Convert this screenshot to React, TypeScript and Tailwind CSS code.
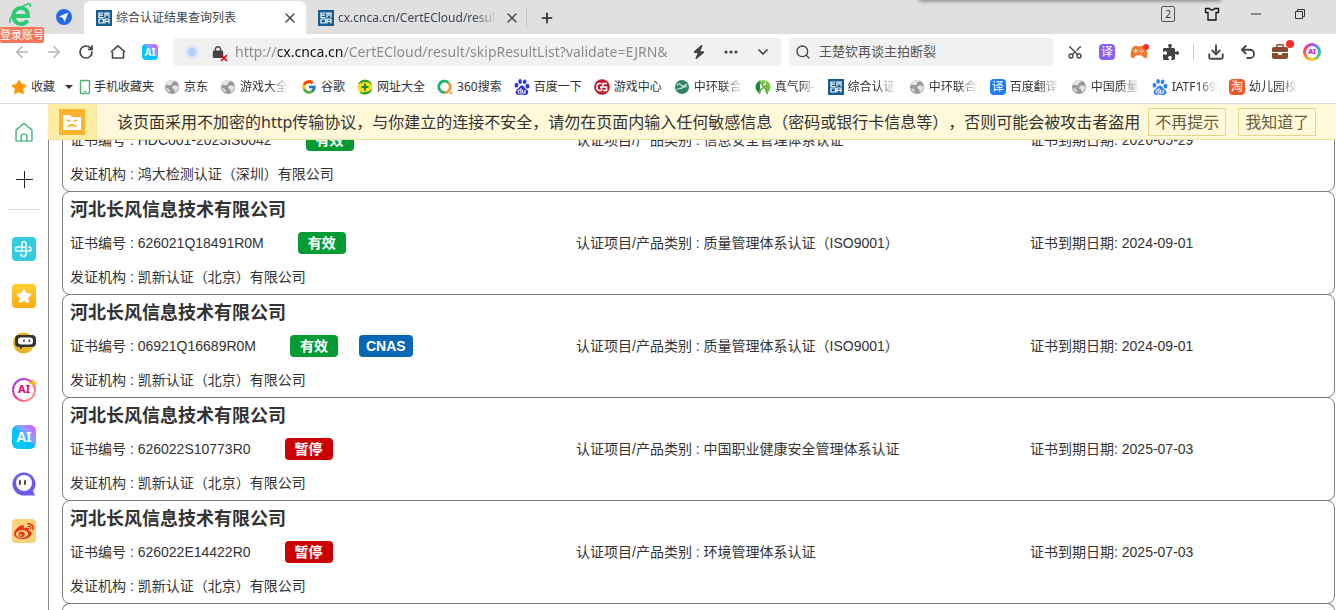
import type { ReactNode } from 'react';
import {
    ArrowLeft, ArrowRight, ChevronDown, Download, Minus, Plus, RotateCw, Scissors, Search, Undo2, X,
} from 'lucide-react';
import { FaBolt, FaBriefcase, FaLock, FaPuzzlePiece, FaStar } from 'react-icons/fa6';
import { FcGoogle } from 'react-icons/fc';
import { IoGameController } from 'react-icons/io5';
import { SiBaidu, SiSinaweibo } from 'react-icons/si';

type Status = 'valid' | 'suspended';

interface Certificate {
    company?: string;
    number: string;
    status: Status;
    cnas?: boolean;
    category: string;
    expires: string;
    issuer: string;
}

const COMPANY = '河北长风信息技术有限公司';
const ISSUER = '凯新认证（北京）有限公司';

const certificates: Certificate[] = [
    { number: 'HDC001-2023IS0042', status: 'valid', category: '信息安全管理体系认证', expires: '2026-05-29', issuer: '鸿大检测认证（深圳）有限公司' },
    { company: COMPANY, number: '626021Q18491R0M', status: 'valid', category: '质量管理体系认证（ISO9001）', expires: '2024-09-01', issuer: ISSUER },
    { company: COMPANY, number: '06921Q16689R0M', status: 'valid', cnas: true, category: '质量管理体系认证（ISO9001）', expires: '2024-09-01', issuer: ISSUER },
    { company: COMPANY, number: '626022S10773R0', status: 'suspended', category: '中国职业健康安全管理体系认证', expires: '2025-07-03', issuer: ISSUER },
    { company: COMPANY, number: '626022E14422R0', status: 'suspended', category: '环境管理体系认证', expires: '2025-07-03', issuer: ISSUER },
];

/* ---------- logos ---------- */

function CncaIcon() {
    return (
        <svg viewBox="0 0 16 16" className="size-4 shrink-0" fill="none" stroke="#fff" strokeWidth="1.2">
            <rect width="16" height="16" fill="#135c94" stroke="none" />
            <path d="M7.500 3H3v4.500h4.500M3 5.200h4M9 7.500V3h4v4.500M11 3v3M3 9v4h4.500M7.500 9H3M9 13.500V9h4v4.500M9 11.300h4M7.500 9v4" />
        </svg>
    );
}

function GlobeIcon() {
    return (
        <svg viewBox="0 0 16 16" className="size-4 shrink-0">
            <circle cx="8" cy="8" r="7" fill="#9a9a9a" />
            <path d="M2 6c2-1 3 1 5 0s0-2 2-3 3-1 3-1l-3-1.200L4.500 2 2 4.500zM9 7c2-1 3 0 5.500 0l-.5 3-2.500 3.500C10 12 11 10.500 9.500 10S8 8 9 7zM2 9l3 1 1 3-2-.5z" fill="#e4e4e4" />
        </svg>
    );
}

function BrowserLogo() {
    return (
        <svg viewBox="0 0 24 24" className="size-6" fill="none">
            <path d="M6 14h14c.3-5-2.800-8-7-8s-7.500 3.200-7.500 8 3.400 8 7.500 8c3 0 5.300-1.300 6.400-3.600" stroke="#2ccb74" strokeWidth="4" />
            <path d="M2 21C1 15 8 6 20 2c2.500-.6 3 1 2 3" stroke="#2ccb74" strokeWidth="1.600" />
        </svg>
    );
}

function AiTile({ className }: { className: string }) {
    return (
        <span className={`flex items-center justify-center bg-linear-to-tr from-cyan-400 via-sky-400 to-fuchsia-500 font-bold text-white ${className}`}>
            AI
        </span>
    );
}

function PhoneIcon() {
    return (
        <svg viewBox="0 0 12 16" className="h-4 w-3 shrink-0" fill="none">
            <rect x="1.500" y="1.500" width="9" height="13" rx="1" stroke="#4caf6f" strokeWidth="1.400" />
            <path d="M4.500 12.600h3" stroke="#4caf6f" />
        </svg>
    );
}

function PlusBallIcon() {
    return (
        <svg viewBox="0 0 16 16" className="size-4 shrink-0">
            <circle cx="8" cy="8" r="7.500" fill="#f8e01c" />
            <path d="M1 5.500a7.500 7.500 0 0 1 14.300 1C12 2 6 2 1 5.500zM15.300 9.500A7.500 7.500 0 0 1 2 12.500c4 1.500 10 1 13.300-3z" fill="#2aa33a" />
            <path d="M8 4.500v7M4.500 8h7" stroke="#168a2c" strokeWidth="2" />
        </svg>
    );
}

function SearchRingIcon() {
    return (
        <svg viewBox="0 0 16 16" className="size-4 shrink-0" fill="none" strokeWidth="2.800">
            <path d="M11.500 3.700A5.700 5.700 0 0 1 7.500 13.500" stroke="#f29a38" />
            <path d="M11.500 3.700A5.700 5.700 0 1 0 7.500 13.500" stroke="#1eb36b" />
            <circle cx="14" cy="14" r="1.300" fill="#f29a38" />
        </svg>
    );
}

function GameCenterIcon() {
    return (
        <svg viewBox="0 0 16 16" className="size-4 shrink-0" fill="none">
            <circle cx="8" cy="8" r="7.800" fill="#c1172c" />
            <path d="M7.500 4.500H4.500L3 6v4l1.500 1.500h3V8H6M13 4.500H9V8h3.500v3.500H9" stroke="#fff" strokeWidth="1.600" />
        </svg>
    );
}

function GreenSealIcon() {
    return (
        <svg viewBox="0 0 16 16" className="size-4 shrink-0" fill="none">
            <circle cx="8" cy="8" r="7" fill="#2d8463" />
            <path d="M3 6.500c1-2 3-2 4-.5s3 1.500 6-1M3 11c2-3 4-1 5-2s3-2 5-1" stroke="#d6eee3" strokeWidth="1.200" />
        </svg>
    );
}

function LeafIcon() {
    return (
        <svg viewBox="0 0 16 16" className="size-4 shrink-0" fill="none">
            <path d="M5 1.500C-1 4-1 12 5 14.500z" fill="#178b3b" />
            <path d="M11 1.500c6 2.500 6 10.500 0 13z" fill="#7fc241" />
            <path d="M5 1.500C6 7 13 9 12 15M11 6C10 9 4 9 4.500 15" stroke="#5eb13d" strokeWidth="1.800" />
            <circle cx="8.500" cy="3" r="2" fill="#7fc241" />
        </svg>
    );
}

function TextTile({ className, children }: { className: string; children: ReactNode }) {
    return (
        <span className={`flex size-4 shrink-0 items-center justify-center rounded-sm text-xs text-white ${className}`}>
            {children}
        </span>
    );
}

/* ---------- tab strip ---------- */

function TabStrip() {
    return (
        <header className="relative flex h-[34px] shrink-0 items-end bg-[#e0e0e0]">
            <div className="absolute -top-1 right-29 h-1 w-75 bg-gray-500 shadow-[0_0_4px_1px_#777]" />
            <div className="relative flex h-full w-10 justify-center pt-0.5">
                <BrowserLogo />
                <a href="#login" className="absolute left-0 top-[27px] z-20 h-4 w-11 rounded-xs bg-[#f8765c] text-center text-[11px] leading-4 whitespace-nowrap text-white">
                    登录账号
                </a>
            </div>
            <button aria-label="导航" className="ml-1 flex h-full w-10 items-center justify-center">
                <svg viewBox="0 0 16 16" className="size-4">
                    <circle cx="8" cy="8" r="8" fill="#2468e8" />
                    <path d="M12.500 3.500 3 7.500l4 1.500 1.500 4z" fill="#fff" />
                </svg>
            </button>
            <div className="flex h-[33px] w-[222px] items-center gap-1 rounded-t-md bg-white pr-2 pl-3">
                <CncaIcon />
                <span className="flex-1 text-xs text-[#444]">综合认证结果查询列表</span>
                <button aria-label="关闭标签页"><X className="size-4 text-[#444]" strokeWidth={2} /></button>
            </div>
            <div className="flex h-[33px] items-center gap-1 pl-3">
                <CncaIcon />
                <span className="w-40 text-xs whitespace-nowrap text-[#3c4654] [mask-image:linear-gradient(to_right,black_85%,transparent)]">
                    cx.cnca.cn/CertECloud/resul
                </span>
                <button aria-label="关闭标签页" className="ml-0.5"><X className="size-4 text-[#444]" strokeWidth={2} /></button>
                <span className="ml-0.5 h-5 w-px bg-[#c4c4c4]" />
                <button aria-label="新建标签页" className="ml-2"><Plus className="size-4 text-[#222]" strokeWidth={2.4} /></button>
            </div>
            <div className="ml-auto flex h-7 items-center self-start pr-3.5">
                <button className="flex w-11 justify-center">
                    <span className="h-4 w-3.5 rounded-xs border border-[#555] text-center text-[10px] leading-[14px] text-[#333]">2</span>
                </button>
                <button aria-label="皮肤" className="flex w-11 justify-center">
                    <svg viewBox="0 0 16 16" className="size-4" fill="none" stroke="#111" strokeWidth="1.300">
                        <path d="M1.500 2.500h4c.5 2 4.500 2 5 0h4v4H12v7.500H4V6.500H1.500z" />
                    </svg>
                </button>
                <button aria-label="最小化" className="flex w-11 justify-center"><Minus className="size-4 text-[#333]" strokeWidth={1.5} /></button>
                <button aria-label="还原" className="flex w-11 justify-center">
                    <svg viewBox="0 0 12 12" className="size-3" fill="none" stroke="#333">
                        <path d="M1.500 3.500h7v7h-7zM3.500 3.500v-2h7v7h-2" />
                    </svg>
                </button>
            </div>
        </header>
    );
}

/* ---------- address bar ---------- */

function ToolButton({ label, children }: { label: string; children: ReactNode }) {
    return (
        <button aria-label={label} className="relative flex h-7 w-8 shrink-0 items-center justify-center text-[#444]">
            {children}
        </button>
    );
}

function Toolbar() {
    return (
        <div className="flex h-9 shrink-0 items-center bg-white pr-2 pl-1.5">
            <ToolButton label="后退"><ArrowLeft className="size-[18px] text-[#b5b5b5]" /></ToolButton>
            <ToolButton label="前进"><ArrowRight className="size-[18px] text-[#b5b5b5]" /></ToolButton>
            <ToolButton label="刷新"><RotateCw className="size-4" strokeWidth={2.6} /></ToolButton>
            <ToolButton label="主页">
                <svg viewBox="0 0 16 16" className="size-4" fill="none" stroke="currentColor" strokeWidth="1.600" strokeLinejoin="round">
                    <path d="M2.500 14V8.500L1.500 7.500 8 1.800l6.500 5.700-1 1V14z" />
                </svg>
            </ToolButton>
            <ToolButton label="AI 助手"><AiTile className="size-4 rounded text-[10px]" /></ToolButton>

            <div className="ml-[7px] flex h-7 flex-1 items-center rounded-sm bg-[#f1f1f1] pl-3">
                <span className="size-3.5 rounded-full border-3 border-[#dce7fb] bg-[#b5cffb]" />
                <span className="relative ml-3 flex size-3.5 items-center justify-center">
                    <FaLock className="size-3 text-[#444]" />
                    <X className="absolute -right-1 -bottom-1 size-2.5 text-red-600" strokeWidth={4} />
                </span>
                <input
                    aria-label="地址"
                    defaultValue="http://cx.cnca.cn/CertECloud/result/skipResultList?validate=EJRN&"
                    className="ml-2.5 min-w-0 flex-1 bg-[linear-gradient(to_right,#888_43px,#111_43px,#111_109px,#888_109px)] bg-clip-text text-sm text-transparent outline-none"
                />
                <div className="flex pr-0.5">
                    <ToolButton label="极速模式"><FaBolt className="size-3.5" /></ToolButton>
                    <ToolButton label="更多">
                        <svg viewBox="0 0 14 4" className="h-1 w-3.5" fill="currentColor">
                            <circle cx="2" cy="2" r="1.600" /><circle cx="7" cy="2" r="1.600" /><circle cx="12" cy="2" r="1.600" />
                        </svg>
                    </ToolButton>
                    <ToolButton label="展开"><ChevronDown className="size-4" strokeWidth={2.6} /></ToolButton>
                </div>
            </div>

            <div className="ml-2 flex h-7 w-66 items-center gap-2 rounded-sm bg-[#f1f1f1] px-1.5">
                <Search className="size-4 text-[#444]" />
                <input aria-label="搜索" defaultValue="王楚钦再谈主拍断裂" className="min-w-0 flex-1 text-[13px] text-[#555] outline-none" />
            </div>

            <div className="ml-1.5 flex items-center">
                <ToolButton label="截图"><Scissors className="size-4 -rotate-90" /></ToolButton>
                <ToolButton label="翻译"><TextTile className="bg-[#8b5cf6]">译</TextTile></ToolButton>
                <ToolButton label="游戏">
                    <IoGameController className="size-[18px] text-[#f4772e]" />
                    <span className="absolute top-1.5 right-1.5 size-1.5 rounded-full bg-red-500" />
                </ToolButton>
                <ToolButton label="扩展"><FaPuzzlePiece className="size-4" /></ToolButton>
                <span className="mx-1.5 h-4 w-px bg-[#ccc]" />
                <ToolButton label="下载"><Download className="size-[18px]" strokeWidth={2.4} /></ToolButton>
                <ToolButton label="撤销"><Undo2 className="size-[18px]" strokeWidth={2.4} /></ToolButton>
                <ToolButton label="工具箱">
                    <FaBriefcase className="size-4 text-[#8c4a2f]" />
                    <span className="absolute top-0.5 right-0.5 size-2 rounded-full bg-[#fa2c2c]" />
                </ToolButton>
                <ToolButton label="AI">
                    <span className="flex size-[18px] items-center justify-center rounded-full bg-[conic-gradient(#b04df0,#3aa0ff,#35d07a,#f7d21e,#ff7a2a,#ff3b6b,#b04df0)] p-[3px]">
                        <span className="flex size-full items-center justify-center rounded-full bg-white text-[7px] font-bold text-fuchsia-600">AI</span>
                    </span>
                </ToolButton>
            </div>
        </div>
    );
}

/* ---------- bookmarks ---------- */

const bookmarks: { label: string; icon: ReactNode; faded?: boolean }[] = [
    { label: '京东', icon: <GlobeIcon /> },
    { label: '游戏大全', icon: <GlobeIcon />, faded: true },
    { label: '谷歌', icon: <FcGoogle className="size-4 shrink-0" /> },
    { label: '网址大全', icon: <PlusBallIcon /> },
    { label: '360搜索', icon: <SearchRingIcon /> },
    { label: '百度一下', icon: <SiBaidu className="size-4 shrink-0 text-[#2b32d9]" /> },
    { label: '游戏中心', icon: <GameCenterIcon /> },
    { label: '中环联合', icon: <GreenSealIcon />, faded: true },
    { label: '真气网-', icon: <LeafIcon />, faded: true },
    { label: '综合认证', icon: <CncaIcon />, faded: true },
    { label: '中环联合', icon: <GlobeIcon />, faded: true },
    { label: '百度翻译', icon: <TextTile className="bg-[#1b7ff0]">译</TextTile>, faded: true },
    { label: '中国质量', icon: <GlobeIcon />, faded: true },
    { label: 'IATF169', icon: <SiBaidu className="size-4 shrink-0 text-[#2f80f0]" />, faded: true },
    { label: '幼儿园校', icon: <TextTile className="bg-[#f0592b]">淘</TextTile>, faded: true },
];

function BookmarkBar() {
    return (
        <nav className="flex h-[34px] shrink-0 items-center gap-3 overflow-hidden border-b border-[#dcdcdc] bg-white pl-[11px] text-xs whitespace-nowrap text-[#333]">
            <button className="flex items-center gap-1">
                <FaStar className="size-4 text-[#ff9800]" />
                收藏
                <span className="ml-1.5 border-x-4 border-t-4 border-x-transparent border-t-[#333]" />
            </button>
            <a href="#mobile" className="-mr-0.5 -ml-1.5 flex items-center gap-[3px]"><PhoneIcon />手机收藏夹</a>
            {bookmarks.map(({ label, icon, faded }, i) => (
                <a key={i} href={`#bookmark-${i}`} className="flex items-center gap-1">
                    {icon}
                    <span className={faded ? 'pr-px [mask-image:linear-gradient(to_right,black_60%,transparent)]' : ''}>{label}</span>
                </a>
            ))}
        </nav>
    );
}

/* ---------- sidebar ---------- */

function SideItem({ label, children }: { label: string; children: ReactNode }) {
    return (
        <button aria-label={label} className="flex h-[47px] w-full items-center justify-center">
            {children}
        </button>
    );
}

function Sidebar() {
    return (
        <aside className="w-12 shrink-0 bg-white pt-1">
            <SideItem label="首页">
                <svg viewBox="0 0 18 20" className="h-5 w-[18px]" fill="none" stroke="#2aa866" strokeWidth="1.200" strokeLinejoin="round">
                    <path d="M1 8 9 1.500 17 8v11H1zM6 19v-4a3 3 0 0 1 6 0v4" />
                </svg>
            </SideItem>
            <SideItem label="添加">
                <svg viewBox="0 0 18 18" className="size-[18px]" stroke="#222"><path d="M9.500 1v17M1 9.500h17" /></svg>
            </SideItem>
            <div className="mx-2 mt-[7px] mb-[15px] h-px bg-[#ddd]" />
            <SideItem label="健康">
                <svg viewBox="0 0 24 24" className="size-6" fill="none">
                    <rect width="24" height="24" rx="4" fill="#35cbe0" />
                    <path d="M10 14V6.500a2 2 0 0 1 4 0V17a2.500 2.500 0 0 1-5 0M14 10H5.500a2 2 0 0 0 0 4H17a2 2 0 0 0 0-4" stroke="#e9fdff" strokeWidth="1.700" strokeLinecap="round" />
                </svg>
            </SideItem>
            <SideItem label="收藏夹">
                <span className="flex size-6 items-center justify-center rounded bg-linear-to-b from-[#ffd02e] to-[#fbaa10]"><FaStar className="size-4 text-white" /></span>
            </SideItem>
            <SideItem label="机器人">
                <svg viewBox="0 0 24 24" className="size-6">
                    <circle cx="11.500" cy="12" r="10.500" fill="#e8b423" />
                    <path d="M7 4h13a4 4 0 0 1 4 4v4a4 4 0 0 1-4 4h-9l-3 2.500V16H7a4 4 0 0 1-4-4V8a4 4 0 0 1 4-4z" fill="#333" />
                    <rect x="6" y="6.500" width="15" height="7" rx="3" fill="#fff" />
                    <path d="M12 8.500V11M17.500 8.500V11" stroke="#333" strokeWidth="1.400" />
                </svg>
            </SideItem>
            <SideItem label="AI 创作">
                <span className="relative">
                    <span className="flex size-6 rounded-full bg-linear-to-br from-violet-600 via-pink-500 to-orange-300 p-0.5">
                        <span className="flex size-full items-center justify-center rounded-full bg-white text-[11px] font-bold text-pink-600">AI</span>
                    </span>
                    <svg viewBox="0 0 8 8" className="absolute top-0 -right-0.5 size-2.5"><path d="m4 0 1 3 3 1-3 1-1 3-1-3-3-1 3-1z" fill="#f3b62f" /></svg>
                </span>
            </SideItem>
            <SideItem label="AI 助手"><AiTile className="size-6 rounded-md text-sm" /></SideItem>
            <SideItem label="聊天">
                <svg viewBox="0 0 24 24" className="size-6">
                    <path d="M12 .5a11.500 11.500 0 1 0 0 23h11l-2-4.500A11.500 11.500 0 0 0 12 .5z" fill="#6a5af0" />
                    <circle cx="12" cy="11" r="8" fill="#fff" />
                    <path d="M8 9v3M13 9v3" stroke="#333" strokeWidth="1.800" strokeLinecap="round" />
                </svg>
            </SideItem>
            <SideItem label="微博">
                <span className="flex size-6 items-center justify-center rounded bg-[#fbd27a]"><SiSinaweibo className="size-5 text-[#e2341d]" /></span>
            </SideItem>
        </aside>
    );
}

/* ---------- page ---------- */

function SecurityNotice() {
    return (
        <div className="relative z-10 flex h-9 shrink-0 items-center border-b border-[#e9dc9c] bg-[#fff9d9] text-base whitespace-nowrap [text-spacing-trim:space-all]">
            <div className="flex h-full w-[49px] items-center justify-center border-r border-[#f3e3a0] bg-[#fdeea3]">
                <svg viewBox="0 0 26 26" className="size-[26px]">
                    <rect width="26" height="26" fill="#ffb22e" />
                    <path d="M4 6h7l2 2h9v13H4z" fill="#fff" />
                    <path d="M8 11l3 1.500M18 11l-3 1.500M9 18c2-3 6-3 8 0" stroke="#ffb22e" strokeWidth="1.800" fill="none" />
                </svg>
            </div>
            <p className="ml-5 text-[#333]">
                该页面采用不加密的http传输协议，与你建立的连接不安全，请勿在页面内输入任何敏感信息（密码或银行卡信息等），否则可能会被攻击者盗用
            </p>
            <button className="ml-2 h-7 border border-[#e6d68a] px-1.5 text-[#66603f]">不再提示</button>
            <button className="ml-3 h-7 border border-[#e6d68a] px-1.5 text-[#66603f]">我知道了</button>
        </div>
    );
}

function StatusBadge({ status }: { status: Status }) {
    return (
        <span className={`ml-[34px] h-[22px] w-12 rounded-sm text-center font-bold leading-[22px] text-white ${status === 'valid' ? 'bg-[#049a34]' : 'bg-[#cb0000]'}`}>
            {status === 'valid' ? '有效' : '暂停'}
        </span>
    );
}

function CertificateCard({ cert }: { cert: Certificate }) {
    return (
        <li className="-mt-px rounded-lg border border-[#808080] px-[7px] text-sm leading-[34px]">
            {cert.company && <h2 className="h-[34px] text-lg font-bold leading-[36px]">{cert.company}</h2>}
            <div className="grid h-[34px] grid-cols-[506fr_454fr_297fr]">
                <div className="flex items-center">
                    <span>证书编号 : {cert.number}</span>
                    <StatusBadge status={cert.status} />
                    {cert.cnas && (
                        <span className="ml-[21px] h-[22px] rounded bg-[#0567b5] px-[7px] font-bold leading-[22px] text-white">CNAS</span>
                    )}
                </div>
                <div>认证项目/产品类别 : {cert.category}</div>
                <div>证书到期日期: {cert.expires}</div>
            </div>
            <div className="h-[34px]">发证机构 : {cert.issuer}</div>
        </li>
    );
}

export default function App() {
    return (
        <div className="flex h-screen flex-col overflow-hidden bg-white font-['Noto_Sans','Noto_Sans_CJK_SC',sans-serif]">
            <TabStrip />
            <Toolbar />
            <BookmarkBar />
            <div className="flex min-h-0 flex-1">
                <Sidebar />
                <main className="flex min-w-0 flex-1 flex-col overflow-hidden">
                    <SecurityNotice />
                    <div className="min-h-0 flex-1 border-l border-[#888]">
                        {/* the list is scrolled a little way under the notice */}
                        <ul className="-mt-[18px] ml-[13px] mr-px font-['Liberation_Sans','Noto_Sans_CJK_SC',sans-serif] text-[#333] [text-spacing-trim:space-all]">
                            {certificates.map((cert) => (
                                <CertificateCard key={cert.number} cert={cert} />
                            ))}
                            <li className="-mt-px h-8 rounded-t-lg border border-b-0 border-[#808080]" />
                        </ul>
                    </div>
                </main>
            </div>
        </div>
    );
}
